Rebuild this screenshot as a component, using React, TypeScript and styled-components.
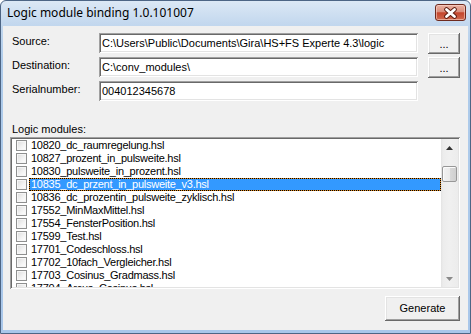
import { createGlobalStyle } from 'styled-components';
import styled from 'styled-components';

const GlobalStyle = createGlobalStyle`
    html, body {
        margin: 0;
        padding: 0;
        background: #ffffff;
    }
    * {
        box-sizing: border-box;
    }
`;

const modules = [
    '10820_dc_raumregelung.hsl',
    '10827_prozent_in_pulsweite.hsl',
    '10830_pulsweite_in_prozent.hsl',
    '10835_dc_przent_in_pulsweite_v3.hsl',
    '10836_dc_prozentin_pulsweite_zyklisch.hsl',
    '17552_MinMaxMittel.hsl',
    '17554_FensterPosition.hsl',
    '17599_Test.hsl',
    '17701_Codeschloss.hsl',
    '17702_10fach_Vergleicher.hsl',
    '17703_Cosinus_Gradmass.hsl',
    '17704_Arcus_Cosinus.hsl',
];

const SELECTED = 3;

const Window = styled.div`
    width: 471px;
    height: 334px;
    display: flex;
    flex-direction: column;
    border: 1px solid #4d6585;
    border-radius: 6px 6px 0 0;
    background: linear-gradient(180deg, #dce8f5 0px, #c2d7ee 24px, #aecbea 60px, #a9c7ea 100%);
    overflow: hidden;
    font-family: "Liberation Sans", Arial, sans-serif;
    font-size: 11px;
    color: #000;
`;

const TitleBar = styled.div`
    height: 25px;
    flex: none;
    display: flex;
    align-items: flex-start;
    padding-left: 6px;
`;

const Title = styled.div`
    flex: 1;
    font-family: "Noto Sans", "Open Sans", sans-serif;
    font-size: 12px;
    line-height: 16px;
    padding-top: 4px;
    color: #000;
`;

const CloseButton = styled.div`
    width: 31px;
    height: 17px;
    margin-top: 3px;
    margin-right: 4px;
    border: 1px solid #6e2a1e;
    border-radius: 3px;
    background: linear-gradient(180deg, #eab1a3 0%, #d98e7c 45%, #c4452c 52%, #cf6a50 100%);
    box-shadow: inset 0 0 0 1px rgba(255, 220, 210, 0.55);
    display: flex;
    align-items: center;
    justify-content: center;
`;

const Client = styled.div`
    flex: 1;
    margin: 0 2px 3px 2px;
    background: #f0f0f0;
    display: flex;
    flex-direction: column;
    padding: 7px 8px 0 7px;
`;

const Form = styled.div`
    display: flex;
    flex-direction: column;
    gap: 4px;
    padding-left: 2px;
`;

const FieldRow = styled.div`
    display: flex;
    align-items: flex-start;
    height: 20px;
`;

const FieldLabel = styled.div`
    width: 87px;
    line-height: 13px;
    padding-top: 2px;
`;

const TextField = styled.input`
    width: 319px;
    height: 20px;
    margin: 0;
    border: none;
    padding: 0 3px;
    font-family: "Liberation Sans", Arial, sans-serif;
    font-size: 11px;
    color: #000;
    background: #fff;
    box-shadow: inset 1px 1px #a0a0a0, inset -1px -1px #fff, inset 2px 2px #696969, inset -2px -2px #e3e3e3;
    outline: none;
`;

const PushButton = styled.div<{ $width: number; $height: number }>`
    width: ${({ $width }) => $width}px;
    height: ${({ $height }) => $height}px;
    display: flex;
    align-items: center;
    justify-content: center;
    background: #f0f0f0;
    box-shadow: inset -1px -1px #696969, inset 1px 1px #fff, inset -2px -2px #a0a0a0, inset 2px 2px #e3e3e3;
    font-size: 11px;
    line-height: 13px;
`;

const BrowseButton = styled(PushButton)`
    margin-left: 10px;
    padding-top: 2px;
`;

const SectionLabel = styled.div`
    margin-top: 22px;
    padding-left: 2px;
    line-height: 13px;
    margin-bottom: 1px;
`;

const ListBox = styled.div`
    height: 152px;
    display: flex;
    background: #fff;
    padding: 2px;
    box-shadow: inset 1px 1px #a0a0a0, inset -1px -1px #fff, inset 2px 2px #696969, inset -2px -2px #e3e3e3;
`;

const Rows = styled.div`
    flex: 1;
    overflow: hidden;
`;

const Row = styled.div`
    height: 13px;
    display: flex;
    align-items: center;
`;

const CheckBox = styled.div`
    width: 11px;
    height: 11px;
    flex: none;
    margin-left: 4px;
    border: 1px solid #8e8f8f;
    background: linear-gradient(135deg, #dcdcdc 0%, #f4f4f4 60%, #fff 100%);
    box-shadow: inset 0 0 0 1px #f6f6f6;
`;

const ItemLabel = styled.div<{ $selected?: boolean }>`
    flex: 1;
    height: 13px;
    margin-left: 2px;
    padding-left: 1px;
    line-height: 11px;
    letter-spacing: -0.25px;
    white-space: nowrap;
    border: 1px ${({ $selected }) => ($selected ? 'dotted #000' : 'solid transparent')};
    color: ${({ $selected }) => ($selected ? '#fff' : '#000')};
    background: ${({ $selected }) =>
        $selected
            ? 'linear-gradient(#3399ff, #3399ff) padding-box, linear-gradient(#e08a1e, #e08a1e) border-box'
            : 'transparent'};
`;

const ScrollBar = styled.div`
    width: 17px;
    flex: none;
    display: flex;
    flex-direction: column;
    align-items: center;
    background: linear-gradient(90deg, #e3e3e3 0px, #ececec 2px, #f0f0f0 8px, #ececec 100%);
`;

const ArrowButton = styled.div`
    height: 17px;
    width: 17px;
    flex: none;
    display: flex;
    align-items: center;
    justify-content: center;
`;

const Track = styled.div`
    flex: 1;
    width: 100%;
    padding: 10px 1px 0 1px;
`;

const Thumb = styled.div`
    height: 16px;
    border: 1px solid #979797;
    border-radius: 2px;
    background: linear-gradient(90deg, #f2f2f2 0%, #ebebeb 50%, #d9d9d9 51%, #cfcfcf 100%);
    box-shadow: inset 1px 1px 0 #fbfbfb;
`;

const Footer = styled.div`
    display: flex;
    justify-content: flex-end;
    margin-top: 7px;
`;

function CloseGlyph() {
    return (
        <svg width="15" height="12" viewBox="0 0 15 12">
            <path d="M3.5 2.5 L11.5 9.5 M11.5 2.5 L3.5 9.5" stroke="#5a1a0e" strokeWidth="4.6" strokeLinecap="round" />
            <path d="M3.5 2.5 L11.5 9.5 M11.5 2.5 L3.5 9.5" stroke="#fff" strokeWidth="2.8" strokeLinecap="round" />
        </svg>
    );
}

function Arrow({ up, color }: { up?: boolean; color: string }) {
    return (
        <svg width="7" height="4" viewBox="0 0 7 4">
            <path d={up ? 'M0 4 L3.5 0 L7 4 Z' : 'M0 0 L7 0 L3.5 4 Z'} fill={color} />
        </svg>
    );
}

export default function App() {
    return (
        <>
            <GlobalStyle />
            <Window>
                <TitleBar>
                    <Title>Logic module binding 1.0.101007</Title>
                    <CloseButton>
                        <CloseGlyph />
                    </CloseButton>
                </TitleBar>
                <Client>
                    <Form>
                        <FieldRow>
                            <FieldLabel>Source:</FieldLabel>
                            <TextField readOnly value={'C:\\Users\\Public\\Documents\\Gira\\HS+FS Experte 4.3\\logic'} />
                            <BrowseButton $width={32} $height={21}>...</BrowseButton>
                        </FieldRow>
                        <FieldRow>
                            <FieldLabel>Destination:</FieldLabel>
                            <TextField readOnly value={'C:\\conv_modules\\'} />
                            <BrowseButton $width={32} $height={21}>...</BrowseButton>
                        </FieldRow>
                        <FieldRow>
                            <FieldLabel>Serialnumber:</FieldLabel>
                            <TextField readOnly value="004012345678" />
                        </FieldRow>
                    </Form>
                    <SectionLabel>Logic modules:</SectionLabel>
                    <ListBox>
                        <Rows>
                            {modules.map((name, i) => (
                                <Row key={name}>
                                    <CheckBox />
                                    <ItemLabel $selected={i === SELECTED}>{name}</ItemLabel>
                                </Row>
                            ))}
                        </Rows>
                        <ScrollBar>
                            <ArrowButton>
                                <Arrow up color="#333" />
                            </ArrowButton>
                            <Track>
                                <Thumb />
                            </Track>
                            <ArrowButton>
                                <Arrow color="#8a8a8a" />
                            </ArrowButton>
                        </ScrollBar>
                    </ListBox>
                    <Footer>
                        <PushButton $width={75} $height={25}>Generate</PushButton>
                    </Footer>
                </Client>
            </Window>
        </>
    );
}
